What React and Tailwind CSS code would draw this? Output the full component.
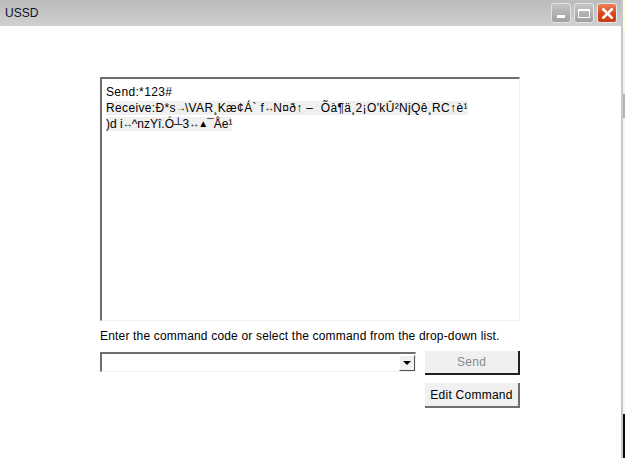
import { X } from 'lucide-react';

function WinButton({ children, close }) {
  return (
    <div
      className={`w-[20px] h-[20px] rounded-[3px] border flex items-center justify-center ${
        close
          ? 'border-[#dfe9f2] bg-gradient-to-b from-[#ee8055] via-[#d9481c] to-[#c83a12]'
          : 'border-[#e4e4e4] bg-gradient-to-b from-[#c4c4c4] to-[#a0a0a0]'
      }`}
    >
      {children}
    </div>
  );
}

// the arrow glyphs sit much narrower in the reference than in Liberation Sans
function Small({ children }) {
  return <span className="text-[10px] tracking-[-1px] align-[1px] leading-[10px]">{children}</span>;
}

export default function App() {
  return (
    <div className="w-[625px] h-[458px] bg-white overflow-hidden flex font-['Liberation_Sans',Arial,sans-serif] text-[12px] text-black">
      <div className="w-[621px] shrink-0 flex flex-col">
        <div className="h-[26px] shrink-0 flex items-center justify-between pl-[5px] pr-[4px] bg-gradient-to-b from-[#bcbcbc] to-[#cfcfcf]">
          <span className="text-[12px] text-[#101030]">USSD</span>
          <div className="flex gap-[3px]">
            <WinButton>
              <div className="w-[8px] h-[3px] bg-white mt-[7px]" />
            </WinButton>
            <WinButton>
              <div className="w-[12px] h-[9px] border border-white border-t-[2px]" />
            </WinButton>
            <WinButton close>
              <X size={17} strokeWidth={3.5} className="text-white" />
            </WinButton>
          </div>
        </div>

        <div className="pl-[100px] pt-[51px]">
          <div className="w-[420px] h-[244px] border-t-2 border-l-2 border-r border-b border-t-[#6e6e6e] border-l-[#6e6e6e] border-r-[#f0f0f0] border-b-[#f0f0f0] pl-[4px] pt-[5px] leading-[16px] whitespace-pre tracking-[0.35px]">
            <div className="h-[16px]">Send:*123#</div>
            <div className="h-[16px]"><span className="bg-[#f0f0f0]">Receive:Ð*s<Small>→</Small>\VAR¸Kæ¢Á` f<Small>↔</Small>N¤ð↑ –  Õà¶ä¸2¡O'kÛ²NjQê¸RC↑è¹</span></div>
            <div className="h-[16px] tracking-[0px]"><span className="bg-[#f0f0f0]">)d i<Small>↔</Small>^nzYî.Ó┴3<Small>↔▲</Small>¯Åe¹</span></div>
          </div>

          <div className="mt-[8px] h-[14px] leading-[14px] tracking-[0.175px] whitespace-nowrap">Enter the command code or select the command from the drop-down list.</div>

          <div className="mt-[8px] flex items-start w-[420px]">
            <div className="w-[316px] h-[20px] mt-[1px] border-t-2 border-l-2 border-r border-b border-t-[#6e6e6e] border-l-[#6e6e6e] border-r-[#f0f0f0] border-b-[#f0f0f0] flex justify-end items-start">
              <div className="w-[16px] h-[16px] mt-[1px] bg-[#f0f0f0] border-t border-l border-r border-b border-t-white border-l-white border-r-[#505050] border-b-[#505050] flex items-center justify-center">
                <div className="w-0 h-0 border-l-[4px] border-r-[4px] border-t-[4px] border-l-transparent border-r-transparent border-t-black" />
              </div>
            </div>
            <button className="ml-[9px] w-[95px] h-[24px] bg-[#f0f0f0] border-r-2 border-b-2 border-r-[#202020] border-b-[#202020] text-[#8a8a8a] tracking-[0.3px]">Send</button>
          </div>

          <div className="mt-[8px] flex justify-end w-[420px]">
            <button className="w-[95px] h-[25px] bg-[#f0f0f0] border-r-2 border-b-2 border-r-[#6e6e6e] border-b-[#6e6e6e] text-black tracking-[0.25px]">Edit Command</button>
          </div>
        </div>
      </div>

      <div className="w-[2px] shrink-0 bg-[#c8c8c8]" />

      <div className="w-[2px] shrink-0 flex flex-col">
        <div className="h-[31px] bg-[#fffde8]" />
        <div className="h-[63px] bg-[#efefef]" />
        <div className="h-[24px] bg-[#b4b4b4]" />
        <div className="h-[296px] bg-[#f4f4f4]" />
        <div className="h-[44px] bg-[#0c0c0c]" />
      </div>
    </div>
  );
}
